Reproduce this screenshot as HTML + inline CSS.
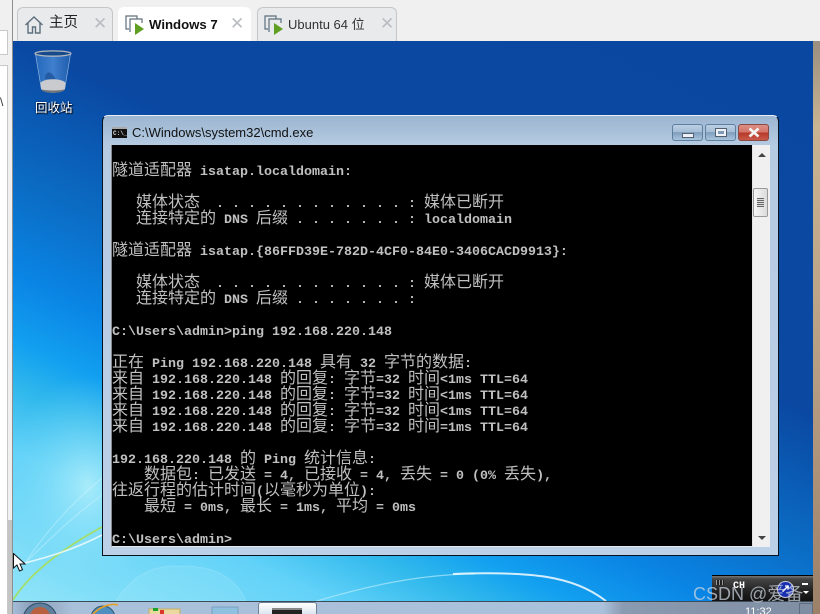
<!DOCTYPE html>
<html><head><meta charset="utf-8">
<style>
html,body{margin:0;padding:0;width:820px;height:614px;overflow:hidden;background:#f0f0f0}
*{box-sizing:border-box}
.a{position:absolute}
#root{position:relative;width:820px;height:614px;overflow:hidden;font-family:"Liberation Sans","Noto Sans CJK SC",sans-serif}
.tab{position:absolute;top:7px;height:34px;background:#e9eaec;border:1px solid #c4c6c9;border-bottom:none;border-radius:6px 6px 0 0}
.x{position:absolute;font-size:17px;color:#b9bcc0;top:6px;line-height:20px;font-family:"DejaVu Sans",sans-serif}
.l{position:absolute;left:112px;height:16px;margin-top:2px;line-height:16px;white-space:pre;color:#c0c0c0;font-family:"Liberation Mono",monospace;font-size:13.33px;font-weight:bold}
.l i{font-style:normal;font-weight:normal;line-height:0;font-family:"WenQuanYi Zen Hei","Noto Sans CJK SC",sans-serif;font-size:16px}
.btn{position:absolute;top:124px;height:17px;border:1px solid #5f7f9f;border-radius:3px;background:linear-gradient(#bcd0e4 0,#a5bdd6 45%,#7f9dbd 50%,#a9c4dd 100%)}
</style></head>
<body><div id="root">

<!-- left panel -->
<div class="a" style="left:0;top:0;width:13px;height:614px;background:#f0f0f0;border-right:1px solid #8f8f8f"></div>
<div class="a" style="left:7px;top:520px;width:5px;height:94px;background:#c4c4c4"></div>
<div class="a" style="left:0;top:30px;width:8px;height:25px;background:#fff;border:1px solid #c9c9c9;border-left:none"></div>
<div class="a" style="left:0;top:65px;width:8px;height:549px;background:#fff;border:1px solid #c9c9c9;border-left:none;border-bottom:none"></div>
<div class="a" style="left:0;top:96px;font-size:12px;color:#333;line-height:12px">\</div>

<!-- right edge -->
<div class="a" style="left:813px;top:41px;width:7px;height:573px;background:linear-gradient(#9a8e80 0,#c9b492 15%,#b49c82 60%,#9c8068 100%)"></div>

<!-- tabs -->
<div class="tab" style="left:17px;width:96px">
  <svg class="a" style="left:6px;top:7px" width="20" height="20" viewBox="0 0 20 20" fill="none" stroke="#5d6f7d" stroke-width="1.4"><path d="M1.5 10 10 2l8.5 8M4 8v10h4.5v-6h3v6H16V8"/></svg>
  <span class="a" style="left:31px;top:5px;font-size:14.5px;line-height:20px;color:#222;white-space:nowrap">主页</span>
  <span class="x" style="left:75px">✕</span>
</div>
<div class="tab" style="left:118px;width:133px;background:#fff;border-color:#fff">
  <svg class="a" style="left:6px;top:7px" width="20" height="21" viewBox="0 0 20 21" fill="none"><path d="M4 14H1V1h11v3M5 17V4h12v4" stroke="#5d6f7d" stroke-width="1.2"/><path d="M10 8v12l9-6z" fill="#5fa022"/></svg>
  <span class="a" style="left:30px;top:7px;font-size:13.2px;line-height:20px;font-weight:bold;color:#111;white-space:nowrap">Windows 7</span>
  <span class="x" style="left:111px">✕</span>
</div>
<div class="tab" style="left:257px;width:140px">
  <svg class="a" style="left:6px;top:7px" width="20" height="21" viewBox="0 0 20 21" fill="none"><path d="M4 14H1V1h11v3M5 17V4h12v4" stroke="#5d6f7d" stroke-width="1.2"/><path d="M10 8v12l9-6z" fill="#5fa022"/></svg>
  <span class="a" style="left:30px;top:7px;font-size:13px;line-height:20px;color:#333;white-space:nowrap">Ubuntu 64 位</span>
  <span class="x" style="left:122px">✕</span>
</div>

<!-- desktop -->
<div class="a" style="left:13px;top:41px;width:800px;height:560px;overflow:hidden;background:linear-gradient(205deg,#0a47a0 0,#0a48a2 40%,#0b6cc4 55%,#0a85e5 65%,#12a0f0 72%,#30b8ec 77%,#62d2f8 84%,#90e4f8 100%)">
  <svg class="a" style="left:0;top:0" width="800" height="560" viewBox="0 0 800 560">
    <defs>
      <radialGradient id="g"><stop offset="0" stop-color="#b5f0fb" stop-opacity=".85"/><stop offset="1" stop-color="#70d8f8" stop-opacity="0"/></radialGradient>
    </defs>
    <ellipse cx="75" cy="445" rx="85" ry="110" fill="url(#g)"/>
    <path d="M103 560C125 525 150 525 170 525 200 525 222 535 233 560Z" fill="#a8ecfb" fill-opacity=".22" stroke="#c0f0ff" stroke-opacity=".25"/>
    <path d="M0 559C15 535 45 510 89 486" stroke="#a4de62" stroke-width="1.6" fill="none"/>
    <path d="M12 522C35 516 60 509 89 494" stroke="#f0fbff" stroke-width="1.6" fill="none" opacity=".85"/>
    <path d="M12 522C35 500 60 475 89 454M12 522C30 495 55 465 89 437" stroke="#e0f8ff" stroke-width="1" fill="none" opacity=".4"/>
    <path d="M304 560C370 540 420 533 462 533" stroke="#bdeefc" stroke-width="1.2" fill="none" opacity=".65"/>
    <path d="M440 533C520 530 560 535 593 560" stroke="#f4fcff" stroke-width="2" fill="none" opacity=".85"/>
  </svg>
</div>

<!-- recycle bin -->
<svg class="a" style="left:33px;top:49px" width="40" height="46" viewBox="0 0 40 46">
  <defs><linearGradient id="b" x1="0" x2="1" y1="0" y2="0"><stop offset="0" stop-color="#2468bc"/><stop offset=".5" stop-color="#3f7fcc"/><stop offset="1" stop-color="#1f5cad"/></linearGradient></defs>
  <path d="M2.5 5 8 38C9 44 31 44 32 38L37.5 5Z" fill="url(#b)" stroke="#8fb6de" stroke-width=".7"/>
  <path d="M12 30C12 22 18 20 23 31Z" fill="#1d4f94" opacity=".7"/>
  <path d="M7.5 34C10 29 30 29 32.5 34L32 40C30 45 10 45 8 40Z" fill="#c9cbce"/>
  <path d="M8 40C10 45 30 45 32 40 30 42 10 42 8 40Z" fill="#6f7378"/>
  <ellipse cx="20" cy="4.5" rx="18" ry="2.6" fill="#174a8a" stroke="#b4b9be" stroke-width="1.3"/>
</svg>
<div class="a" style="left:35px;top:99px;font-family:'WenQuanYi Zen Hei','Noto Sans CJK SC',sans-serif;font-size:12.5px;line-height:16px;color:#fff;text-shadow:1px 1px 1px #000,0 0 2px #0a2a60;white-space:nowrap">回收站</div>

<!-- cmd window -->
<div class="a" style="left:102px;top:115px;width:677px;height:441px;border:1px solid #06121e;border-top-color:#e8eef4;border-radius:6px 6px 0 0;background:linear-gradient(#9cb5d1 0,#b5cbe2 30px,#bcd0e8 100%)"></div>
<div class="a" style="left:112px;top:127px;width:15px;height:11px;background:#111;border-top:2px solid #aaa"></div>
<div class="a" style="left:113px;top:130px;font:bold 6px/7px 'Liberation Mono',monospace;color:#ddd">C:\_</div>
<div class="a" style="left:132px;top:124px;font-size:13px;line-height:17px;color:#111;white-space:nowrap">C:\Windows\system32\cmd.exe</div>

<div class="btn" style="left:672px;width:31px"><div class="a" style="left:9px;top:8px;width:12px;height:5px;background:#eef2f6;border:1px solid #51606e"></div></div>
<div class="btn" style="left:705px;width:31px"><div class="a" style="left:9px;top:3px;width:12px;height:9px;background:#eef2f6;border:1px solid #51606e"><div style="margin:2px;height:3px;background:#7e9ab8"></div></div></div>
<div class="btn" style="left:738px;width:31px;border-color:#8a4a44;background:linear-gradient(#dc8f85 0,#d5766b 45%,#b73a2a 55%,#c9594a 100%)"><svg class="a" style="left:8px;top:2px" width="14" height="11" viewBox="0 0 14 11"><path d="M2.5 1.5 11.5 9.5M11.5 1.5 2.5 9.5" stroke="#f4f4f4" stroke-width="2.6"/></svg></div>

<!-- console -->
<div class="a" style="left:111px;top:145px;width:641px;height:402px;background:#000;border-bottom:1px solid #e8e8e8;border-left:1px solid #888"></div>
<!-- scrollbar -->
<div class="a" style="left:752px;top:145px;width:18px;height:402px;background:#f0f0f0;border-left:1px solid #e4e4e4"></div>
<div class="a" style="left:758px;top:153px;border:4px solid transparent;border-top:none;border-bottom:4px solid #444;width:0"></div>
<div class="a" style="left:753px;top:188px;width:15px;height:29px;border:1px solid #9a9a9a;border-radius:2px;background:linear-gradient(90deg,#f6f6f6,#dcdcdc)"></div>
<div class="a" style="left:757px;top:198px;width:7px;height:9px;background:repeating-linear-gradient(#666 0,#666 1px,#ddd 1px,#ddd 2px)"></div>
<div class="a" style="left:758px;top:536px;border:4px solid transparent;border-bottom:none;border-top:4px solid #444;width:0"></div>

<div class="l" style="top:163px"><i>隧道适配器</i> isatap.localdomain:</div>
<div class="l" style="top:195px">   <i>媒体状态</i>  . . . . . . . . . . . . : <i>媒体已断开</i></div>
<div class="l" style="top:211px">   <i>连接特定的</i> DNS <i>后缀</i> . . . . . . . : localdomain</div>
<div class="l" style="top:243px"><i>隧道适配器</i> isatap.{86FFD39E-782D-4CF0-84E0-3406CACD9913}:</div>
<div class="l" style="top:275px">   <i>媒体状态</i>  . . . . . . . . . . . . : <i>媒体已断开</i></div>
<div class="l" style="top:291px">   <i>连接特定的</i> DNS <i>后缀</i> . . . . . . . :</div>
<div class="l" style="top:323px">C:\Users\admin>ping 192.168.220.148</div>
<div class="l" style="top:355px"><i>正在</i> Ping 192.168.220.148 <i>具有</i> 32 <i>字节的数据</i>:</div>
<div class="l" style="top:371px"><i>来自</i> 192.168.220.148 <i>的回复</i>: <i>字节</i>=32 <i>时间</i>&lt;1ms TTL=64</div>
<div class="l" style="top:387px"><i>来自</i> 192.168.220.148 <i>的回复</i>: <i>字节</i>=32 <i>时间</i>&lt;1ms TTL=64</div>
<div class="l" style="top:403px"><i>来自</i> 192.168.220.148 <i>的回复</i>: <i>字节</i>=32 <i>时间</i>&lt;1ms TTL=64</div>
<div class="l" style="top:419px"><i>来自</i> 192.168.220.148 <i>的回复</i>: <i>字节</i>=32 <i>时间</i>=1ms TTL=64</div>
<div class="l" style="top:451px">192.168.220.148 <i>的</i> Ping <i>统计信息</i>:</div>
<div class="l" style="top:467px">    <i>数据包</i>: <i>已发送</i> = 4, <i>已接收</i> = 4, <i>丢失</i> = 0 (0% <i>丢失</i>),</div>
<div class="l" style="top:483px"><i>往返行程的估计时间</i>(<i>以毫秒为单位</i>):</div>
<div class="l" style="top:499px">    <i>最短</i> = 0ms, <i>最长</i> = 1ms, <i>平均</i> = 0ms</div>
<div class="l" style="top:531px">C:\Users\admin></div>

<!-- cursor -->
<svg class="a" style="left:13px;top:553px" width="14" height="20" viewBox="0 0 14 20"><path d="M0.5 0.5V15L4 12l2.5 6 3-1.3L7 11h5z" fill="#fff" stroke="#111" stroke-width="1"/></svg>

<!-- taskbar -->
<div class="a" style="left:13px;top:601px;width:800px;height:13px;background:linear-gradient(90deg,#a3bcd8 0,#8a9db5 20px,#a9c0da 60px,#aac1db 590px,#8a9ab0 610px,#7f8ea3 100%);border-top:1px solid #3d4a58"></div>
<svg class="a" style="left:13px;top:602px" width="310" height="12" viewBox="0 0 310 12">
  <circle cx="27" cy="18" r="17" fill="#5f7f9a" stroke="#2f4f6f"/>
  <circle cx="27" cy="15" r="10" fill="#b8603f"/>
  <circle cx="90" cy="16" r="12" fill="#4f8fc0" stroke="#34566f"/>
  <path d="M80 12C88 4 98 1 105 3" stroke="#e8a020" stroke-width="1.6" fill="none"/>
  <rect x="136" y="7" width="31" height="6" fill="#e9d9a0" stroke="#c7ab5e"/>
  <rect x="140" y="6" width="5" height="3" fill="#1aa52a"/>
  <rect x="147" y="8" width="4" height="4" fill="#d8382a"/>
  <rect x="199" y="5" width="26" height="8" fill="#8fc0e0" stroke="#7aa0c0"/>
</svg>
<div class="a" style="left:258px;top:602px;width:59px;height:12px;background:linear-gradient(#fff,#dce6f0);border:1px solid #6f8093;border-bottom:none;border-radius:3px 3px 0 0"></div>
<div class="a" style="left:272px;top:608px;width:30px;height:6px;background:#222;border-top:2px solid #888"></div>
<div class="a" style="left:745px;top:606px;height:8px;overflow:hidden;font-size:11px;line-height:12px;color:#fff;white-space:nowrap">11:32</div>
<div class="a" style="left:799px;top:603px;width:14px;height:11px;background:#7f8ea3;border:1px solid #5f6d80;border-bottom:none"></div>

<!-- language bar -->
<div class="a" style="left:712px;top:575px;width:101px;height:26px;background:linear-gradient(#777 0,#444 3px,#222 60%,#111 100%);border-top:1px solid #000"></div>
<div class="a" style="left:716px;top:580px;width:8px;height:5px;background:repeating-linear-gradient(90deg,#999 0,#999 1px,#222 1px,#222 3px)"></div>
<div class="a" style="left:733px;top:581px;font:bold 10px/12px 'Liberation Mono',monospace;color:#fff">CH</div>
<div class="a" style="left:777px;top:581px;width:17px;height:17px;border-radius:50%;background:#1a2fb0;border:1px solid #ccd;color:#fff;font:bold 11px/15px 'Liberation Sans',sans-serif;text-align:center">↗</div>
<div class="a" style="left:802px;top:583px;width:6px;height:2px;background:#fff"></div>
<div class="a" style="left:803px;top:591px;border:3px solid transparent;border-top:3px solid #fff;border-bottom:none;width:0"></div>

<!-- watermark -->
<div class="a" style="left:693px;top:583px;font-size:18px;line-height:22px;color:rgba(205,215,225,.72);white-space:nowrap">CSDN @爱备</div>

</div></body></html>
